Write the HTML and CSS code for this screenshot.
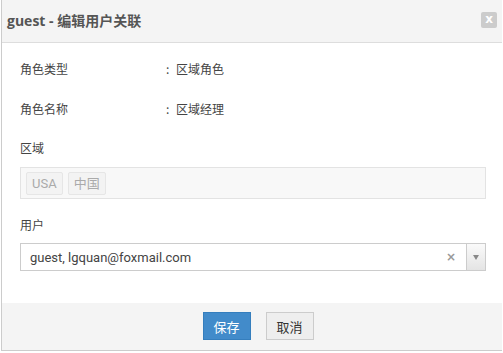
FILE: index.html
```html
<!DOCTYPE html>
<html lang="zh">
<head>
  <meta charset="UTF-8" />
  <title>guest - 编辑用户关联</title>
  <link rel="stylesheet" href="styles.css">
</head>
<body>
  <div class="dialog">
    <div class="dlg-head">
      <span class="dlg-title">guest - 编辑用户关联</span>
      <span class="dlg-close">x</span>
    </div>
    <div class="dlg-body">
      <div class="info-row">
        <span class="info-label">角色类型</span>
        <span class="info-colon">:</span>
        <span class="info-value">区域角色</span>
      </div>
      <div class="info-row">
        <span class="info-label">角色名称</span>
        <span class="info-colon">:</span>
        <span class="info-value">区域经理</span>
      </div>
      <div class="field-label">区域</div>
      <div class="tag-box">
        <span class="tag">USA</span>
        <span class="tag">中国</span>
      </div>
      <div class="field-label user-label">用户</div>
      <div class="select">
        <span class="select-text">guest, lgquan@foxmail.com</span>
        <span class="select-clear">×</span>
        <span class="select-arrow"><span class="caret"></span></span>
      </div>
    </div>
    <div class="dlg-foot">
      <button class="btn btn-primary">保存</button>
      <button class="btn">取消</button>
    </div>
  </div>
</body>
</html>
```

FILE: styles.css
```css
body {
  margin: 0;
  background: #fff;
  font-family: 'Noto Sans CJK SC', sans-serif;
  font-size: 12px;
  color: #444;
}
.dialog {
  width: 500px;
  height: 350px;
  margin-left: 1px;
  border-left: 1px solid #ccc;
  border-bottom: 1px solid #ccc;
  background: #fff;
  display: flex;
  flex-direction: column;
}
.dlg-head {
  height: 43px;
  background: #f4f4f4;
  border-bottom: 1px solid #ddd;
  display: flex;
  align-items: center;
  justify-content: space-between;
  padding: 0 5px 0 5px;
  box-sizing: border-box;
}
.dlg-title {
  font-family: 'Open Sans', 'Noto Sans CJK SC', sans-serif;
  font-weight: 700;
  font-size: 14px;
  color: #555;
  margin-top: -2px;
}
.dlg-close {
  width: 16px;
  height: 16px;
  background: #ccc;
  color: #fff;
  border-radius: 2px;
  font-family: 'DejaVu Sans', sans-serif;
  font-weight: 700;
  font-size: 12px;
  line-height: 14px;
  text-align: center;
  margin-top: -3px;
}
.dlg-body {
  flex: 1;
  padding: 17px 16px 0 18px;
}
.info-row {
  display: flex;
  height: 40px;
  line-height: 18px;
}
.info-label {
  width: 146px;
}
.info-colon {
  width: 10px;
}
.field-label {
  line-height: 18px;
  margin-top: -1px;
}
.tag-box {
  margin-top: 10px;
  height: 30px;
  border: 1px solid #e3e3e3;
  background: #f8f8f8;
  display: flex;
  align-items: center;
  gap: 5px;
  padding: 0 5px;
}
.tag {
  font-family: 'Roboto', 'Noto Sans CJK SC', sans-serif;
  font-size: 13px;
  color: #aaa;
  border: 1px solid #e6e6e6;
  background: #f3f3f3;
  border-radius: 2px;
  padding: 0 5px;
  line-height: 21px;
}
.user-label {
  margin-top: 17px;
}
.select {
  margin-top: 9px;
  height: 26px;
  border: 1px solid #ccc;
  display: flex;
  align-items: center;
  font-family: 'Roboto', sans-serif;
  font-size: 13px;
  color: #444;
}
.select-text {
  flex: 1;
  padding-left: 9px;
}
.select-clear {
  color: #999;
  font-family: 'DejaVu Sans', sans-serif;
  font-weight: 700;
  font-size: 12px;
  margin-right: 10px;
}
.select-arrow {
  width: 18px;
  height: 26px;
  border-left: 1px solid #ccc;
  background: linear-gradient(#fafafa, #e4e4e4);
  display: flex;
  align-items: center;
  justify-content: center;
}
.caret {
  border-top: 5px solid #888;
  border-left: 3px solid transparent;
  border-right: 3px solid transparent;
}
.dlg-foot {
  height: 47px;
  background: #f4f4f4;
  display: flex;
  justify-content: center;
  align-items: center;
  gap: 15px;
  padding-left: 12px;
}
.btn {
  width: 48px;
  height: 28px;
  font-family: 'Noto Sans CJK SC', sans-serif;
  font-size: 13px;
  border: 1px solid #ccc;
  background: #eee;
  color: #333;
  padding: 0;
  margin-top: -1px;
}
.btn-primary {
  background: #428bca;
  border-color: #357ebd;
  color: #fff;
}
```
